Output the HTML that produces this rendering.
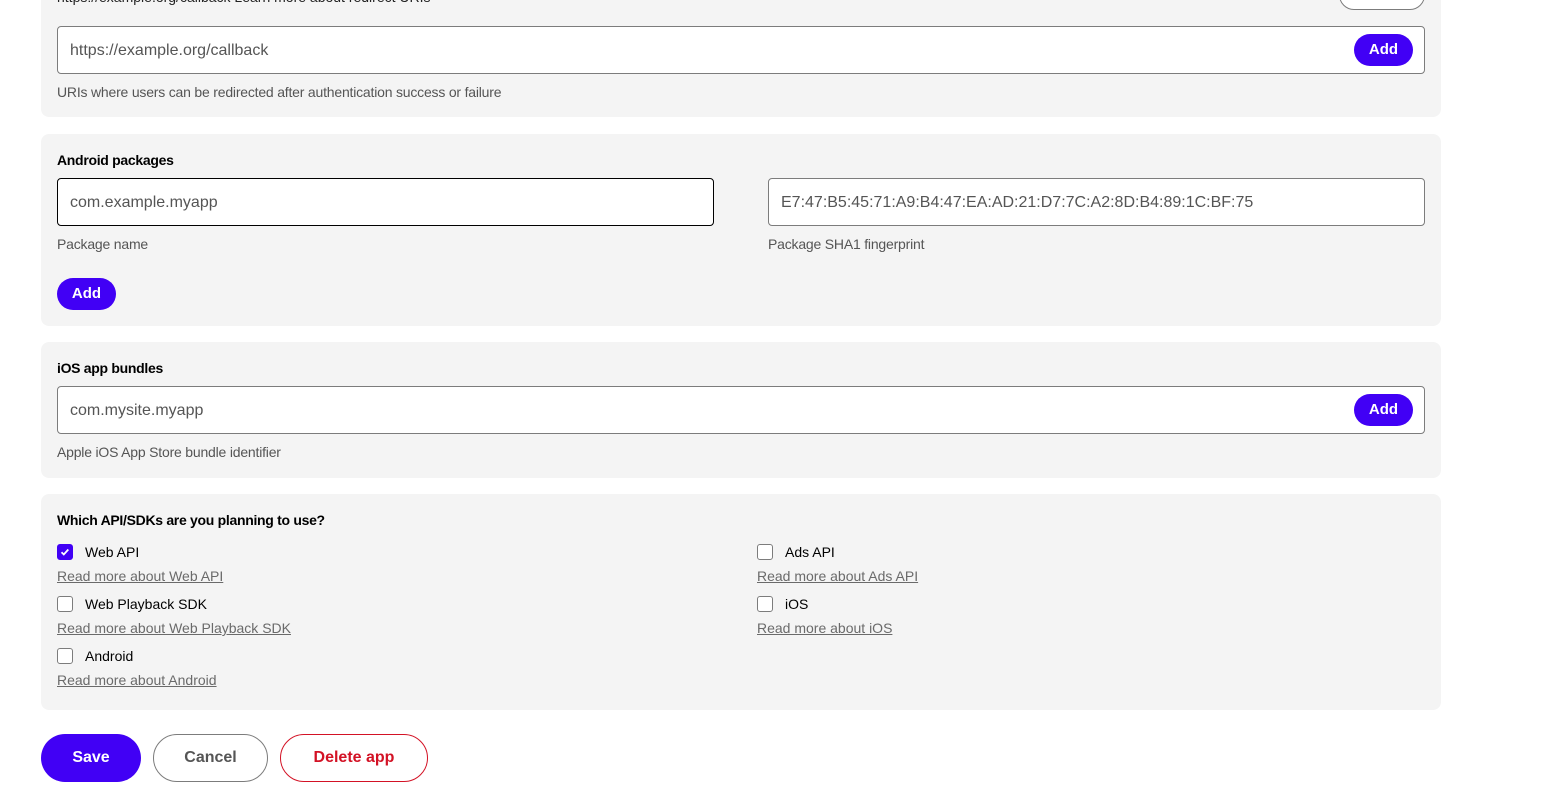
<!DOCTYPE html>
<html><head><meta charset="utf-8"><style>
*{box-sizing:border-box;margin:0;padding:0}
body{width:1561px;height:808px;background:#fff;font-family:"Liberation Sans",sans-serif;position:relative;overflow:hidden;color:#000}
.panel{position:absolute;left:41px;width:1400px;background:#f4f4f4;border-radius:8px}
.input{position:absolute;height:48px;background:#fff;border:1px solid #7c7c7c;border-radius:4px;font-size:16px;color:#555;padding-left:12px;line-height:48px}
.add{position:absolute;background:#4100f5;color:#fff;font-weight:bold;font-size:15px;border-radius:16px;width:59px;height:32px;line-height:32px;text-align:center}
.help{position:absolute;font-size:14px;color:#555;letter-spacing:-0.2px}
.h{position:absolute;font-size:14px;font-weight:bold;letter-spacing:-0.3px}
.cb{position:absolute;width:16px;height:16px;border:1px solid #7c7c7c;border-radius:3px;background:#fff}
.cb.on{background:#4100f5;border-color:#4100f5}
.lbl{position:absolute;font-size:14px;color:#000}
.lnk{position:absolute;font-size:14px;color:#6a6a6a;text-decoration:underline}
.btn{position:absolute;top:734px;height:48px;border-radius:24px;font-weight:bold;font-size:16px;text-align:center;line-height:48px}
</style></head><body>
<div class="panel" style="top:-20px;height:137px"></div>
<div style="position:absolute;left:57px;top:-11px;font-size:14px;color:#222">https://example.org/callback Learn more about redirect URIs</div>
<div style="position:absolute;left:1339px;top:-20px;width:86px;height:30px;border:1px solid #7c7c7c;border-radius:15px;background:#fff"></div>
<div class="input" style="left:57px;top:26px;width:1368px">https://example.org/callback</div>
<div class="add" style="left:1354px;top:34px">Add</div>
<div class="help" style="left:57px;top:84px">URIs where users can be redirected after authentication success or failure</div>

<div class="panel" style="top:134px;height:192px"></div>
<div class="h" style="left:57px;top:152px">Android packages</div>
<div class="input" style="left:57px;top:178px;width:657px;border-color:#000">com.example.myapp</div>
<div class="input" style="left:768px;top:178px;width:657px">E7:47:B5:45:71:A9:B4:47:EA:AD:21:D7:7C:A2:8D:B4:89:1C:BF:75</div>
<div class="help" style="left:57px;top:236px">Package name</div>
<div class="help" style="left:768px;top:236px">Package SHA1 fingerprint</div>
<div class="add" style="left:57px;top:278px">Add</div>

<div class="panel" style="top:342px;height:136px"></div>
<div class="h" style="left:57px;top:360px">iOS app bundles</div>
<div class="input" style="left:57px;top:386px;width:1368px">com.mysite.myapp</div>
<div class="add" style="left:1354px;top:394px">Add</div>
<div class="help" style="left:57px;top:444px">Apple iOS App Store bundle identifier</div>

<div class="panel" style="top:494px;height:216px"></div>
<div class="h" style="left:57px;top:512px">Which API/SDKs are you planning to use?</div>
<div class="cb on" style="left:57px;top:544px"><svg width="14" height="14" viewBox="0 0 14 14" style="position:absolute;left:0;top:0"><path d="M3.5 7.2l2.3 2.3 4.5-5" stroke="#fff" stroke-width="1.8" fill="none"/></svg></div>
<div class="lbl" style="left:85px;top:544px">Web API</div>
<div class="lnk" style="left:57px;top:568px">Read more about Web API</div>
<div class="cb" style="left:57px;top:596px"></div>
<div class="lbl" style="left:85px;top:596px">Web Playback SDK</div>
<div class="lnk" style="left:57px;top:620px">Read more about Web Playback SDK</div>
<div class="cb" style="left:57px;top:648px"></div>
<div class="lbl" style="left:85px;top:648px">Android</div>
<div class="lnk" style="left:57px;top:672px">Read more about Android</div>
<div class="cb" style="left:757px;top:544px"></div>
<div class="lbl" style="left:785px;top:544px">Ads API</div>
<div class="lnk" style="left:757px;top:568px">Read more about Ads API</div>
<div class="cb" style="left:757px;top:596px"></div>
<div class="lbl" style="left:785px;top:596px">iOS</div>
<div class="lnk" style="left:757px;top:620px">Read more about iOS</div>

<div class="btn" style="left:41px;width:100px;background:#4100f5;color:#fff">Save</div>
<div class="btn" style="left:153px;width:115px;border:1px solid #7c7c7c;color:#555;line-height:46px">Cancel</div>
<div class="btn" style="left:280px;width:148px;border:1px solid #d31225;color:#d31225;line-height:46px">Delete app</div>
</body></html>
